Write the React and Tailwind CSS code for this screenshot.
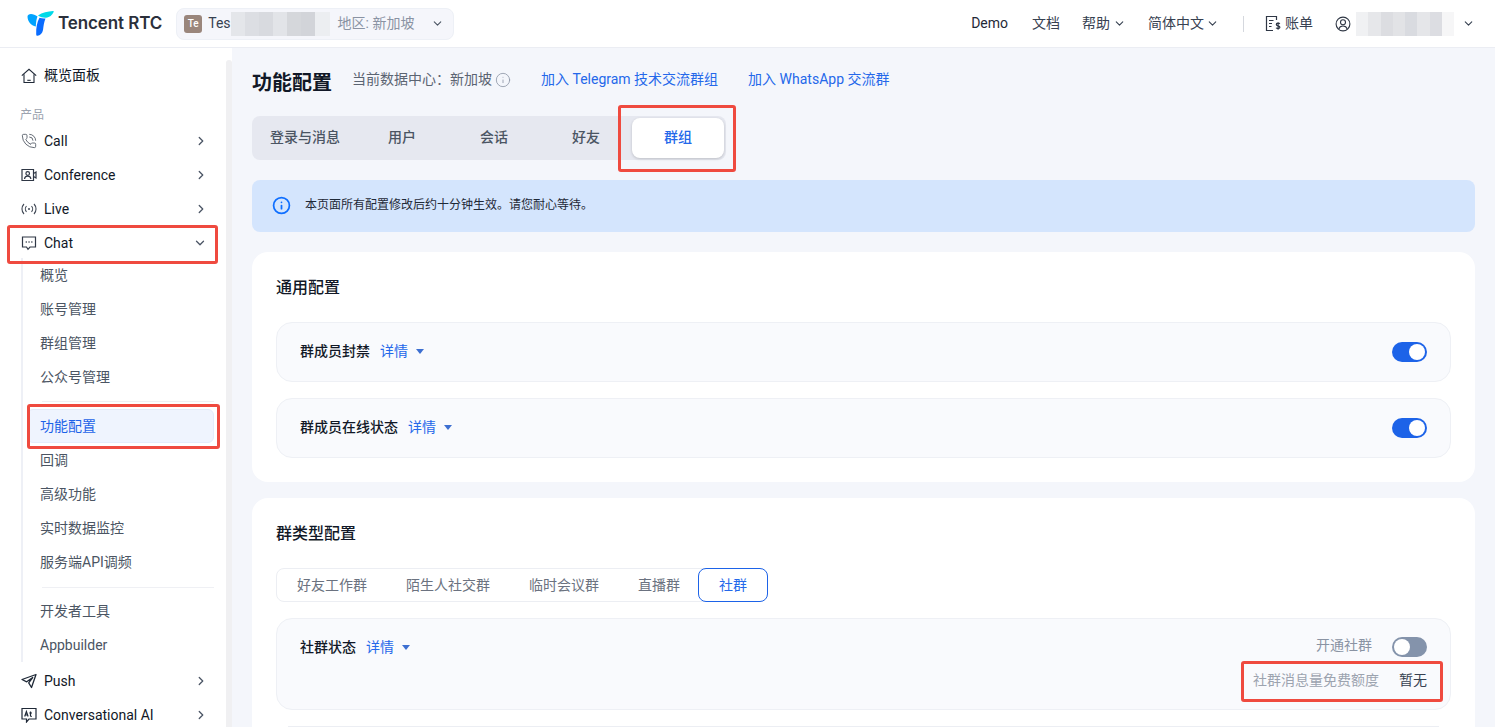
import { ChevronDown, ChevronRight, PhoneCall, Info } from 'lucide-react';

const Redact = ({ cells, className }) => (
  <div className={`flex ${className}`}>
    {cells.map((c, i) => (
      <div key={i} className="h-full flex-1" style={{ backgroundColor: c }} />
    ))}
  </div>
);

const Logo = () => (
  <svg width="27" height="25" viewBox="0 0 27 25">
    <path d="M.5 5.500C.5 4 2 3 4 3c2 0 4.500 1 6.500 2.500-1 2.500-1.500 5.500-1.700 10C4 15 .5 10 .5 5.500z" fill="#00a3ff" />
    <path d="M11 4.500C15 1.500 21 .3 26 0c.6 0 1 .5.5 1.300C25 4 23 6.500 19 6.700c-3 .1-5.500-.7-8-2.200z" fill="#00d9e8" />
    <path d="M18.500 7.500C17 11 16.500 15 16 19c-.5 3.500-3 5.500-5.500 5.800-1 .2-1.300-.8-1.300-1.800C9 17 10 11 12.500 6.800c2 .7 4 .9 6 .7z" fill="#0a6cff" />
  </svg>
);

const HouseIcon = () => (
  <svg width="16" height="16" viewBox="0 0 16 16" fill="none" stroke="#1f2937" strokeWidth="1.1">
    <path d="M.8 7.700L8 1.300l7.200 6.400" />
    <path d="M3 6.200v8.300h10V6.200" />
    <path d="M6.300 12.300h3.400" />
  </svg>
);

const BillIcon = () => (
  <svg width="17" height="17" viewBox="0 0 17 17" fill="none" stroke="#2f3745" strokeWidth="1.2">
    <path d="M11.500 5V1.500H1.500v14H8" />
    <path d="M4 5.500h4.500M4 8.500h3M4 11.500h2.500" />
    <path d="M14.800 8.800c-.6-.9-3.500-1-3.500.7 0 1.800 3.600 1 3.600 2.800 0 1.700-3.200 1.500-3.800.5M13.100 7.200v7.600" />
  </svg>
);

const ConferenceIcon = () => (
  <svg width="16" height="16" viewBox="0 0 16 16" fill="none" stroke="#2f3745" strokeWidth="1.2">
    <path d="M1 2.500h11.500v11H1z" />
    <circle cx="6.700" cy="6.500" r="1.800" />
    <path d="M3.500 12c.3-2 1.500-2.800 3.200-2.800s2.900.8 3.200 2.800" />
    <path d="M12.500 6.500L15 5v6l-2.500-1.500" />
  </svg>
);

const LiveIcon = () => (
  <svg width="16" height="16" viewBox="0 0 16 16" fill="none" stroke="#3f4754" strokeWidth="1.1">
    <circle cx="8" cy="8" r="1" fill="#3f4754" stroke="none" />
    <path d="M5.500 5.200c-1.500 1.500-1.500 4.100 0 5.600M10.500 5.200c1.500 1.500 1.500 4.100 0 5.600" />
    <path d="M3 3c-2.700 2.800-2.700 7.200 0 10M13 3c2.700 2.800 2.700 7.200 0 10" />
  </svg>
);

const ChatIcon = () => (
  <svg width="16" height="16" viewBox="0 0 16 16" fill="none" stroke="#2f3745" strokeWidth="1.2">
    <path d="M1.500 2h13v10H9l-2 2.300L5.500 12h-4z" />
    <path d="M4.700 7h1.100M7.500 7h1.100M10.300 7h1.100" strokeWidth="1.400" />
  </svg>
);

const PushIcon = () => (
  <svg width="16" height="16" viewBox="0 0 16 16" fill="none" stroke="#1f2937" strokeWidth="1.3" strokeLinejoin="round">
    <path d="M15 1.500L1 6.500l4.700 2.300 6-4.300-4 5.300L10.500 14.500z" />
  </svg>
);

const AiIcon = () => (
  <svg width="16" height="16" viewBox="0 0 16 16" fill="none" stroke="#1f2937" strokeWidth="1.2">
    <path d="M1 1.500h14v10.500H8l-2.500 3v-3H1z" />
    <path d="M3.700 9.500l1.700-5 1.700 5M4.300 8h2.200M9.500 4.500v4.300c0 .6.500.7 1.300.7M8.300 6h2.700" />
  </svg>
);

const CallIcon = () => <PhoneCall size={16} strokeWidth={1.2} className="text-[#3f4754]" />;

const nav1 = [
  { label: 'Call', Icon: CallIcon },
  { label: 'Conference', Icon: ConferenceIcon },
  { label: 'Live', Icon: LiveIcon },
];

const NavRow = ({ label, Icon, open }) => (
  <div className="flex h-[34px] items-center pl-[21px] pr-[24px] text-[14px] text-[#111827]">
    <span className="flex w-[23px] shrink-0 items-center"><Icon /></span>
    <span className="flex-1">{label}</span>
    {open ? (
      <ChevronDown size={14} strokeWidth={2.200} className="mr-px text-[#4b5565]" />
    ) : (
      <ChevronRight size={14} strokeWidth={2.200} className="text-[#4b5565]" />
    )}
  </div>
);

const SubRow = ({ label }) => (
  <div className="flex h-[34px] items-center pl-[17px] text-[14px] text-[#4b5563]">{label}</div>
);

const Sidebar = () => (
  <aside className="relative h-full w-[232px] shrink-0 overflow-hidden bg-white">
    <div className="flex h-[55px] items-center pl-[21px] text-[14px] text-[#111827]">
      <span className="flex w-[23px]"><HouseIcon /></span>
      概览面板
    </div>
    <div className="pl-[20px] pt-[3px] text-[12px] leading-[18px] text-[#9ca3af]">产品</div>
    <div>
      {nav1.map((n) => <NavRow key={n.label} {...n} />)}
      <NavRow label="Chat" open Icon={ChatIcon} />
    </div>
    <div className="-mt-[2px] mb-[2px] ml-[21px] mr-[18px] border-l-2 border-[#eef0f6]">
      {['概览', '账号管理', '群组管理', '公众号管理'].map((s) => <SubRow key={s} label={s} />)}
      <div className="ml-[19px] mt-[7px] mb-[7px] h-px bg-[#eff0f4]" />
      <div className="ml-[4px] flex h-[34px] items-center rounded-md border border-[#e4ecfb] bg-[#eff4fe] pl-[12px] text-[14px] text-[#1d63e8]">功能配置</div>
      {['回调', '高级功能', '实时数据监控', '服务端API调频'].map((s) => <SubRow key={s} label={s} />)}
      <div className="ml-[19px] mt-[8px] mb-[6px] h-px bg-[#eff0f4]" />
      <SubRow label="开发者工具" />
      <SubRow label="Appbuilder" />
    </div>
    <NavRow label="Push" Icon={PushIcon} />
    <NavRow label="Conversational AI" Icon={AiIcon} />
    <div className="absolute right-0 top-[12px] bottom-0 w-[6px] rounded-t bg-[#f0f0f2]" />
  </aside>
);

const Toggle = ({ on }) => (
  <div className={`flex h-[20px] w-[35px] items-center rounded-full px-[2px] ${on ? 'justify-end bg-[#1d63e8]' : 'justify-start bg-[#8493ab]'}`}>
    <div className="h-[16px] w-[16px] rounded-full bg-white" />
  </div>
);

const Detail = () => (
  <span className="ml-[10px] flex items-center text-[#2468ea]">
    详情
    <span className="ml-[8px] h-0 w-0 border-x-[4px] border-t-[5px] border-x-transparent border-t-[#3d6fd1]" />
  </span>
);

const ConfigRow = ({ title }) => (
  <div className="flex h-[60px] items-center justify-between rounded-2xl border border-[#eef0f5] bg-[#f9fafd] pl-[23px] pr-[23px] text-[14px]">
    <div className="flex items-center pb-[2px]">
      <span className="font-medium text-[#111827]">{title}</span>
      <Detail />
    </div>
    <Toggle on />
  </div>
);

const Frame = ({ className }) => (
  <div className={`pointer-events-none absolute rounded-[3px] border-[3px] border-[#ef4a3f] ${className}`} />
);

export default function App() {
  return (
    <div className="relative flex h-[727px] w-[1495px] flex-col overflow-hidden bg-[#f4f6fb] font-['Roboto','Noto_Sans_CJK_SC',sans-serif]">
      {/* Header */}
      <header className="flex h-[48px] shrink-0 items-center border-b border-[#ebedf3] bg-white pl-[27px] pr-[20px]">
        <Logo />
        <span className="ml-[4px] font-['Inter'] text-[17px] font-semibold tracking-[-0.1px] text-[#2b303b]">Tencent RTC</span>
        <div className="ml-[14px] flex h-[32px] w-[278px] items-center rounded-lg border border-[#edf0f6] bg-[#f5f6fb] pl-[7px] pr-[9px] text-[14px]">
          <span className="flex h-[18px] w-[18px] items-center justify-center rounded-[3px] bg-[#9a867c] text-[10px] font-medium text-white">Te</span>
          <span className="ml-[6px] text-[#374151]">Tes</span>
          <Redact className="h-[24px] w-[99px]" cells={['#e4e6ea', '#dcdee3', '#d8dadf', '#e2e4e8', '#d5d7db', '#d2d4d9', '#eceef1']} />
          <span className="ml-[8px] flex-1 text-[#8a93a3]">地区: 新加坡</span>
          <ChevronDown size={13} strokeWidth={2} className="text-[#4b5563]" />
        </div>
        <nav className="ml-auto flex items-center text-[14px] text-[#374151]">
          <span className="text-[#1f2937]">Demo</span>
          <span className="ml-[24px]">文档</span>
          <span className="ml-[22px] flex items-center gap-[3px]">帮助<ChevronDown size={13} strokeWidth={2} /></span>
          <span className="ml-[22px] flex items-center gap-[2px]">简体中文<ChevronDown size={13} strokeWidth={2} /></span>
          <span className="ml-[24px] h-[16px] w-px bg-[#d5d8de]" />
          <span className="ml-[21px] flex items-center gap-[3px]"><BillIcon />账单</span>
          <svg width="16" height="16" viewBox="0 0 16 16" fill="none" stroke="#2f3745" strokeWidth="1.1" className="ml-[22px]">
            <circle cx="8" cy="8" r="6.900" />
            <circle cx="8" cy="6.300" r="2.500" />
            <path d="M3.800 13c.6-2 2.200-3 4.200-3s3.600 1 4.200 3" />
          </svg>
          <Redact className="ml-[5px] h-[24px] w-[98px]" cells={['#f0f1f3', '#e6e7ea', '#dcdde1', '#e2e3e6', '#d9dbe0', '#e5e6e9', '#dcdde2', '#f6f6f7']} />
          <ChevronDown size={13} strokeWidth={2} className="ml-[8px]" />
        </nav>
      </header>

      <div className="flex min-h-0 flex-1">
        <Sidebar />
        <main className="min-w-0 flex-1 pl-[20px] pr-[20px]">
          <div className="flex h-[68px] items-center pt-[1px]">
            <h1 className="text-[20px] font-bold text-[#111827]">功能配置</h1>
            <div className="mb-[6px] flex items-center text-[14px]">
              <span className="ml-[20px] text-[#5b6472]">当前数据中心：新加坡</span>
              <Info size={16} strokeWidth={1.200} className="ml-[3px] text-[#8a93a3]" />
              <span className="ml-[30px] text-[#2468ea]">加入 Telegram 技术交流群组</span>
              <span className="ml-[30px] text-[#2468ea]">加入 WhatsApp 交流群</span>
            </div>
          </div>

          {/* Tabs */}
          <div className="flex h-[44px] w-[474px] items-center rounded-lg bg-[#e6e8f0] pl-[3px] pr-[1px] text-[14px] font-medium text-[#4b5563]">
            <span className="mr-px w-[100px] pb-[2px] text-center">登录与消息</span>
            <span className="w-[92px] pb-[2px] text-center">用户</span>
            <span className="w-[92px] pb-[2px] text-center">会话</span>
            <span className="w-[92px] pb-[2px] text-center">好友</span>
            <span className="flex h-[40px] w-[92px] items-center justify-center rounded-lg bg-white pb-[2px] text-[#2468ea] shadow-[0_1px_3px_rgba(0,0,0,0.18)]">群组</span>
          </div>

          {/* Notice */}
          <div className="mt-[20px] flex h-[52px] items-center rounded-lg bg-[#d4e5fd] pb-[2px] pl-[20px] text-[12px] text-[#1f2937]">
            <Info size={19} strokeWidth={2.200} className="text-[#0f6fff]" />
            <span className="ml-[14px]">本页面所有配置修改后约十分钟生效。请您耐心等待。</span>
          </div>

          {/* General */}
          <section className="mt-[20px] h-[230px] rounded-2xl bg-white px-[24px] pt-[25px]">
            <h2 className="text-[16px] font-medium leading-[22px] text-[#111827]">通用配置</h2>
            <div className="mt-[23px] flex flex-col gap-[16px]">
              <ConfigRow title="群成员封禁" />
              <ConfigRow title="群成员在线状态" />
            </div>
          </section>

          {/* Group type */}
          <section className="mt-[16px] h-[300px] rounded-2xl bg-white px-[24px] pt-[25px]">
            <h2 className="text-[16px] font-medium leading-[22px] text-[#111827]">群类型配置</h2>
            <div className="mt-[23px] flex h-[34px] w-[492px] items-center rounded-lg border border-[#eceef3] text-[14px] text-[#6b7280]">
              <span className="ml-[20px]">好友工作群</span>
              <span className="ml-[39px]">陌生人社交群</span>
              <span className="ml-[39px]">临时会议群</span>
              <span className="ml-[39px]">直播群</span>
              <span className="ml-auto -mr-px flex h-[34px] w-[70px] items-center justify-center rounded-lg border border-[#1d63e8] bg-white text-[#2468ea]">社群</span>
            </div>
            <div className="mt-[16px] flex h-[92px] justify-between rounded-2xl border border-[#eef0f5] bg-[#f9fafd] pl-[23px] pr-[23px] pt-[18px] text-[14px]">
              <div className="flex h-[20px] items-center">
                <span className="font-medium text-[#111827]">社群状态</span>
                <Detail />
              </div>
              <div className="flex flex-col items-end">
                <div className="flex h-[20px] items-center">
                  <span className="pb-[3px] text-[#8a93a3]">开通社群</span>
                  <span className="ml-[20px]"><Toggle /></span>
                </div>
                <div className="mt-[13px] flex items-center">
                  <span className="text-[#9ca3af]">社群消息量免费额度</span>
                  <span className="ml-[20px] text-[#374151]">暂无</span>
                </div>
              </div>
            </div>
            <div className="mx-[12px] mt-[16px] h-px bg-[#eceef3]" />
          </section>
        </main>
      </div>

      {/* Red annotation frames */}
      <Frame className="left-[7px] top-[225px] h-[39px] w-[211px]" />
      <Frame className="left-[27px] top-[404px] h-[45px] w-[193px]" />
      <Frame className="left-[618px] top-[105px] h-[67px] w-[118px]" />
      <Frame className="left-[1241px] top-[661px] h-[41px] w-[202px]" />
    </div>
  );
}
